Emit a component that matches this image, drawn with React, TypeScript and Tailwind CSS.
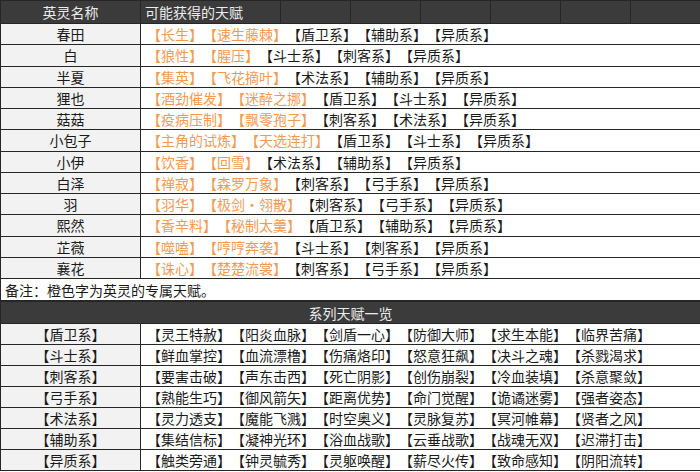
import React from "react";

type Hero = { name: string; own: string[]; series: string[] };

const HEROES: Hero[] = [
  { name: "春田", own: ["长生", "速生藤棘"], series: ["盾卫系", "辅助系", "异质系"] },
  { name: "白", own: ["狼性", "腥压"], series: ["斗士系", "刺客系", "异质系"] },
  { name: "半夏", own: ["集英", "飞花摘叶"], series: ["术法系", "辅助系", "异质系"] },
  { name: "狸也", own: ["酒劲催发", "迷醉之挪"], series: ["盾卫系", "斗士系", "异质系"] },
  { name: "菇菇", own: ["疫病压制", "飘零孢子"], series: ["刺客系", "术法系", "异质系"] },
  { name: "小包子", own: ["主角的试炼", "天选连打"], series: ["盾卫系", "斗士系", "异质系"] },
  { name: "小伊", own: ["饮香", "回雪"], series: ["术法系", "辅助系", "异质系"] },
  { name: "白泽", own: ["禅寂", "森罗万象"], series: ["刺客系", "弓手系", "异质系"] },
  { name: "羽", own: ["羽华", "极剑·翎散"], series: ["刺客系", "弓手系", "异质系"] },
  { name: "熙然", own: ["香辛料", "秘制太羹"], series: ["盾卫系", "辅助系", "异质系"] },
  { name: "芷薇", own: ["噬嗑", "哼哼奔袭"], series: ["斗士系", "刺客系", "异质系"] },
  { name: "襄花", own: ["诛心", "楚楚流裳"], series: ["刺客系", "弓手系", "异质系"] },
];

const SERIES: { name: string; talents: string[] }[] = [
  { name: "盾卫系", talents: ["灵王特赦", "阳炎血脉", "剑盾一心", "防御大师", "求生本能", "临界苦痛"] },
  { name: "斗士系", talents: ["鲜血掌控", "血流漂橹", "伤痛烙印", "怒意狂飙", "决斗之魂", "杀戮渴求"] },
  { name: "刺客系", talents: ["要害击破", "声东击西", "死亡阴影", "创伤崩裂", "冷血装填", "杀意聚敛"] },
  { name: "弓手系", talents: ["熟能生巧", "御风箭矢", "距离优势", "命门觉醒", "诡谲迷雾", "强者姿态"] },
  { name: "术法系", talents: ["灵力透支", "魔能飞溅", "时空奥义", "灵脉复苏", "冥河帷幕", "贤者之风"] },
  { name: "辅助系", talents: ["集结信标", "凝神光环", "浴血战歌", "云垂战歌", "战魂无双", "迟滞打击"] },
  { name: "异质系", talents: ["触类旁通", "钟灵毓秀", "灵躯唤醒", "薪尽火传", "致命感知", "阴阳流转"] },
];

const cell = "border border-[#262626] p-0 leading-none";

export default function App() {
  return (
    <div
      className="w-[700px] h-[472px] bg-white overflow-hidden text-[14px] text-[#1a1a1a] [text-spacing-trim:space-all]"
      style={{ fontFamily: '"Noto Sans CJK SC", "Noto Sans", sans-serif' }}
    >
      <table className="w-[700px] table-fixed border-collapse">
        <colgroup>
          <col className="w-[140px]" />
          <col className="w-[140px]" />
          <col className="w-[70px]" />
          <col className="w-[70px]" />
          <col className="w-[70px]" />
          <col className="w-[70px]" />
          <col className="w-[70px]" />
          <col className="w-[70px]" />
        </colgroup>
        <tbody>
          <tr className="h-[23px] bg-[#3b3b3b] text-[#ececec]">
            <td className={`${cell} text-center`}>英灵名称</td>
            <td className={`${cell} pl-[4px] whitespace-nowrap`}>可能获得的天赋</td>
            <td className={cell}></td>
            <td className={cell}></td>
            <td className={cell}></td>
            <td className={cell}></td>
            <td className={cell}></td>
            <td className={cell}></td>
          </tr>
          {HEROES.map((h) => (
            <tr key={h.name} className="h-[21.25px]">
              <td className={`${cell} bg-[#f2f2f2] text-center`}>{h.name}</td>
              <td colSpan={7} className={`${cell} pl-[6px] whitespace-nowrap`}>
                {h.own.map((t) => (
                  <span key={t} className="text-[#f29a52]">【{t}】</span>
                ))}
                {h.series.map((t) => (
                  <span key={t}>【{t}】</span>
                ))}
              </td>
            </tr>
          ))}
          <tr className="h-[22px]">
            <td colSpan={8} className={`${cell} pl-[4px]`}>备注：橙色字为英灵的专属天赋。</td>
          </tr>
        </tbody>
      </table>
      <table className="w-[700px] table-fixed border-collapse">
        <colgroup>
          <col className="w-[140px]" />
          <col className="w-[560px]" />
        </colgroup>
        <tbody>
          <tr className="h-[22px] bg-[#3b3b3b] text-[#ececec]">
            <td colSpan={2} className={`${cell} text-center`}>系列天赋一览</td>
          </tr>
          {SERIES.map((s) => (
            <tr key={s.name} className="h-[21px]">
              <td className={`${cell} bg-[#f2f2f2] text-center`}>【{s.name}】</td>
              <td className={`${cell} pl-[6px] whitespace-nowrap`}>
                {s.talents.map((t) => (
                  <span key={t}>【{t}】</span>
                ))}
              </td>
            </tr>
          ))}
        </tbody>
      </table>
    </div>
  );
}
